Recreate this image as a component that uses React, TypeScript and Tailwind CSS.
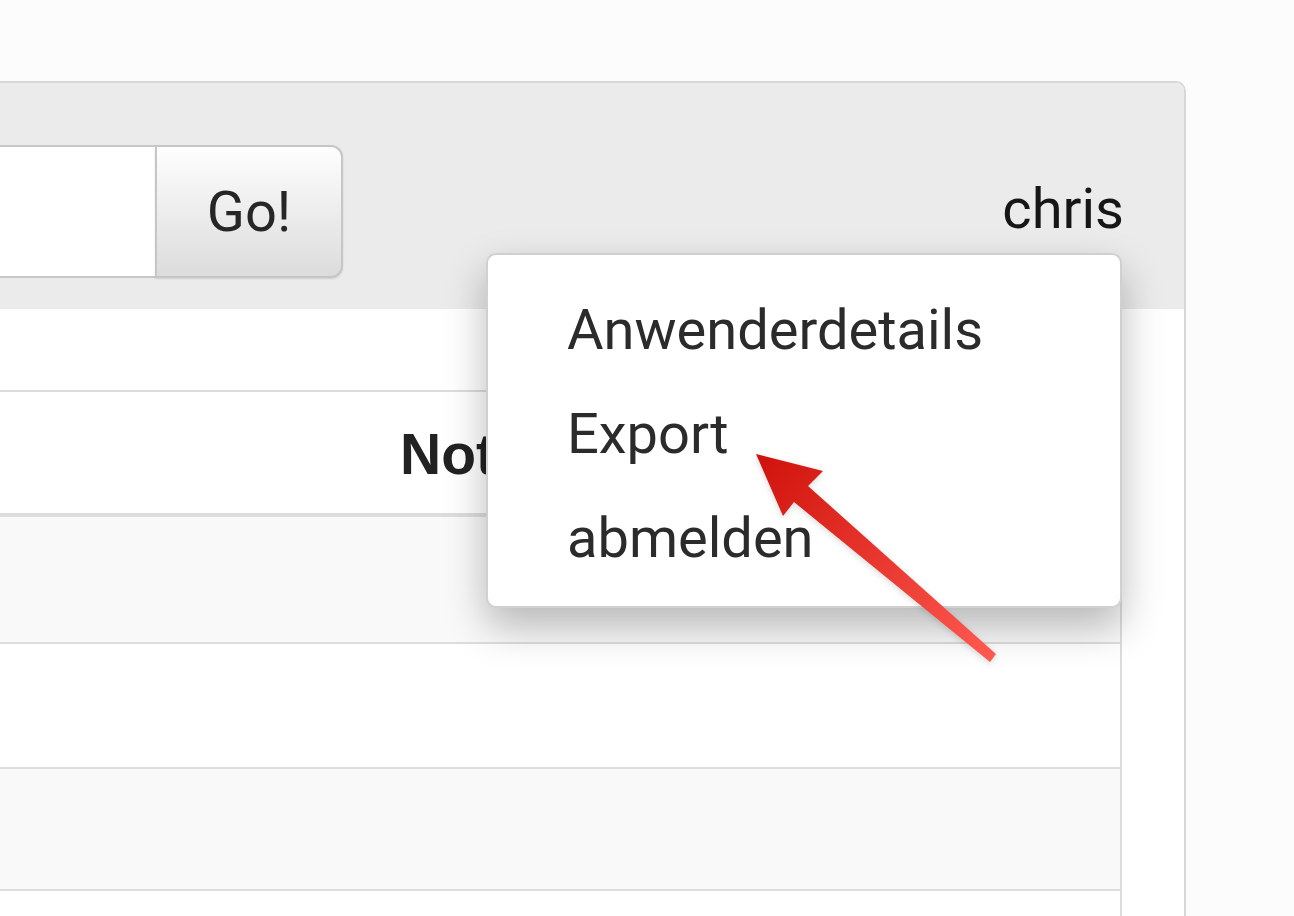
export default function App() {
  const rows = [
    "h-[127px] bg-[#f9f9f9]",
    "h-[125px] bg-white",
    "h-[122px] bg-[#f9f9f9]",
    "h-[125px] bg-white",
  ];

  return (
    <div className="relative min-h-screen w-full overflow-hidden bg-[#fcfcfc] pt-[81px] font-['Roboto',sans-serif]">
      {/* Panel */}
      <div className="-ml-10 mr-[108px] rounded-tr-[10px] border-t-2 border-r-2 border-[#d8d8d8] bg-white">
        {/* Header bar */}
        <div className="relative flex h-[226px] items-start justify-between rounded-tr-[8px] bg-[#ebebeb]">
          <div className="mt-[62px] flex h-[133px]">
            <div className="w-[195px] border-y-2 border-[#c8c8c8] bg-white" />
            <button className="flex w-[188px] items-center justify-center rounded-r-[12px] border-2 border-[#c6c6c6] bg-gradient-to-b from-[#fefefe] to-[#dcdcdc] text-[56px] text-[#262626] shadow-[0_1px_2px_rgba(0,0,0,0.12)]">
              Go!
            </button>
          </div>

          <div className="relative mr-[60px] mt-[93px]">
            <span className="block text-[56px] leading-[66px] text-[#161616]">chris</span>

            {/* Dropdown menu */}
            <div className="absolute right-[2px] top-[77px] z-10 h-[355px] w-[636px] rounded-[10px] border-2 border-[#d0d0d0] bg-white pt-[23px] pl-[79px] shadow-[0_18px_40px_rgba(0,0,0,0.27)]">
              <ul className="text-[56px] leading-[104px] text-[#2b2b2b]">
                <li>Anwenderdetails</li>
                <li>Export</li>
                <li>abmelden</li>
              </ul>
            </div>
          </div>
        </div>

        {/* Body */}
        <div className="pt-[81px] pr-[62px]">
          <div className="rounded-tr-[8px] border-t-2 border-r-2 border-[#dcdcdc]">
            <div className="flex h-[125px] items-center border-b-4 border-[#dddddd] bg-white pl-[440px] pt-[4px]">
              <span className="font-['Liberation_Sans',Arial,sans-serif] text-[57px] font-bold text-[#222]">
                Notizen
              </span>
            </div>
            {rows.map((cls, i) => (
              <div key={i} className={`${cls} border-b-2 border-[#dddddd]`} />
            ))}
          </div>
        </div>
      </div>

      {/* Red annotation arrow */}
      <svg
        className="pointer-events-none absolute inset-0 z-20"
        width="1294"
        height="916"
        viewBox="0 0 1294 916"
      >
        <defs>
          <linearGradient id="arrowGrad" x1="756" y1="454" x2="993" y2="658" gradientUnits="userSpaceOnUse">
            <stop offset="0" stopColor="#cf120b" />
            <stop offset="1" stopColor="#ff5a50" />
          </linearGradient>
        </defs>
        <polygon
          points="756,454 823,471 808,486 996,654 990,662 794,502 783,516"
          fill="url(#arrowGrad)"
          style={{ filter: "drop-shadow(0 2px 3px rgba(0,0,0,0.15))" }}
        />
      </svg>
    </div>
  );
}
